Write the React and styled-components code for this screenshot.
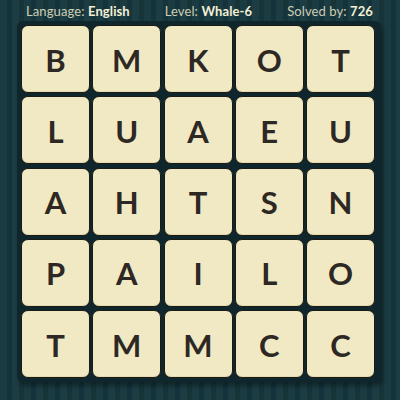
import React from "react";
import styled, { createGlobalStyle } from "styled-components";

const Global = createGlobalStyle`
  html, body { margin: 0; padding: 0; }
  body {
    width: 400px;
    height: 400px;
    overflow: hidden;
    background-color: #183840;
    background-image: repeating-linear-gradient(
      90deg,
      #1a3b42 0px,
      #1a3b42 7px,
      #15333a 7px,
      #15333a 12px,
      #1c3d44 12px,
      #1c3d44 19px,
      #173539 19px,
      #173539 24px
    );
    font-family: Lato, "Open Sans", sans-serif;
  }
`;

const Page = styled.div`
  width: 400px;
  height: 400px;
  display: flex;
  flex-direction: column;
`;

const Header = styled.div`
  height: 21px;
  display: flex;
  align-items: center;
  justify-content: space-between;
  padding: 0 27px 0 26px;
  font-size: 13px;
  color: #cfcdb4;
  letter-spacing: 0.1px;
`;

const Stat = styled.span`
  white-space: nowrap;
`;

const Value = styled.b`
  font-weight: 700;
  color: #f3efd6;
`;

const Board = styled.div`
  margin-left: 17px;
  width: 355px;
  padding: 4px 5px 4px 4px;
  background: #0f262c;
  border-radius: 6px;
  box-shadow: 2px 4px 4px rgba(0, 0, 0, 0.35);
  display: grid;
  grid-template-columns: repeat(5, 69px);
  grid-auto-rows: 68px;
  column-gap: 2.25px;
  row-gap: 3.25px;
`;

const Tile = styled.div`
  background: #f1e9c3;
  border: 1px solid #1c1a15;
  border-radius: 7px;
  box-sizing: border-box;
  box-shadow: inset 0 -1px 0 #e4dbb0;
  display: flex;
  align-items: center;
  justify-content: center;
  font-size: 31px;
  font-weight: 700;
  color: #2d2823;
  padding-top: 1px;
`;

const rows = ["BMKOT", "LUAEU", "AHTSN", "PAILO", "TMMCC"];

export default function App() {
  return (
    <Page>
      <Global />
      <Header>
        <Stat>
          Language: <Value>English</Value>
        </Stat>
        <Stat>
          Level: <Value>Whale-6</Value>
        </Stat>
        <Stat>
          Solved by: <Value>726</Value>
        </Stat>
      </Header>
      <Board>
        {rows.join("").split("").map((ch, i) => (
          <Tile key={i}>{ch}</Tile>
        ))}
      </Board>
    </Page>
  );
}
